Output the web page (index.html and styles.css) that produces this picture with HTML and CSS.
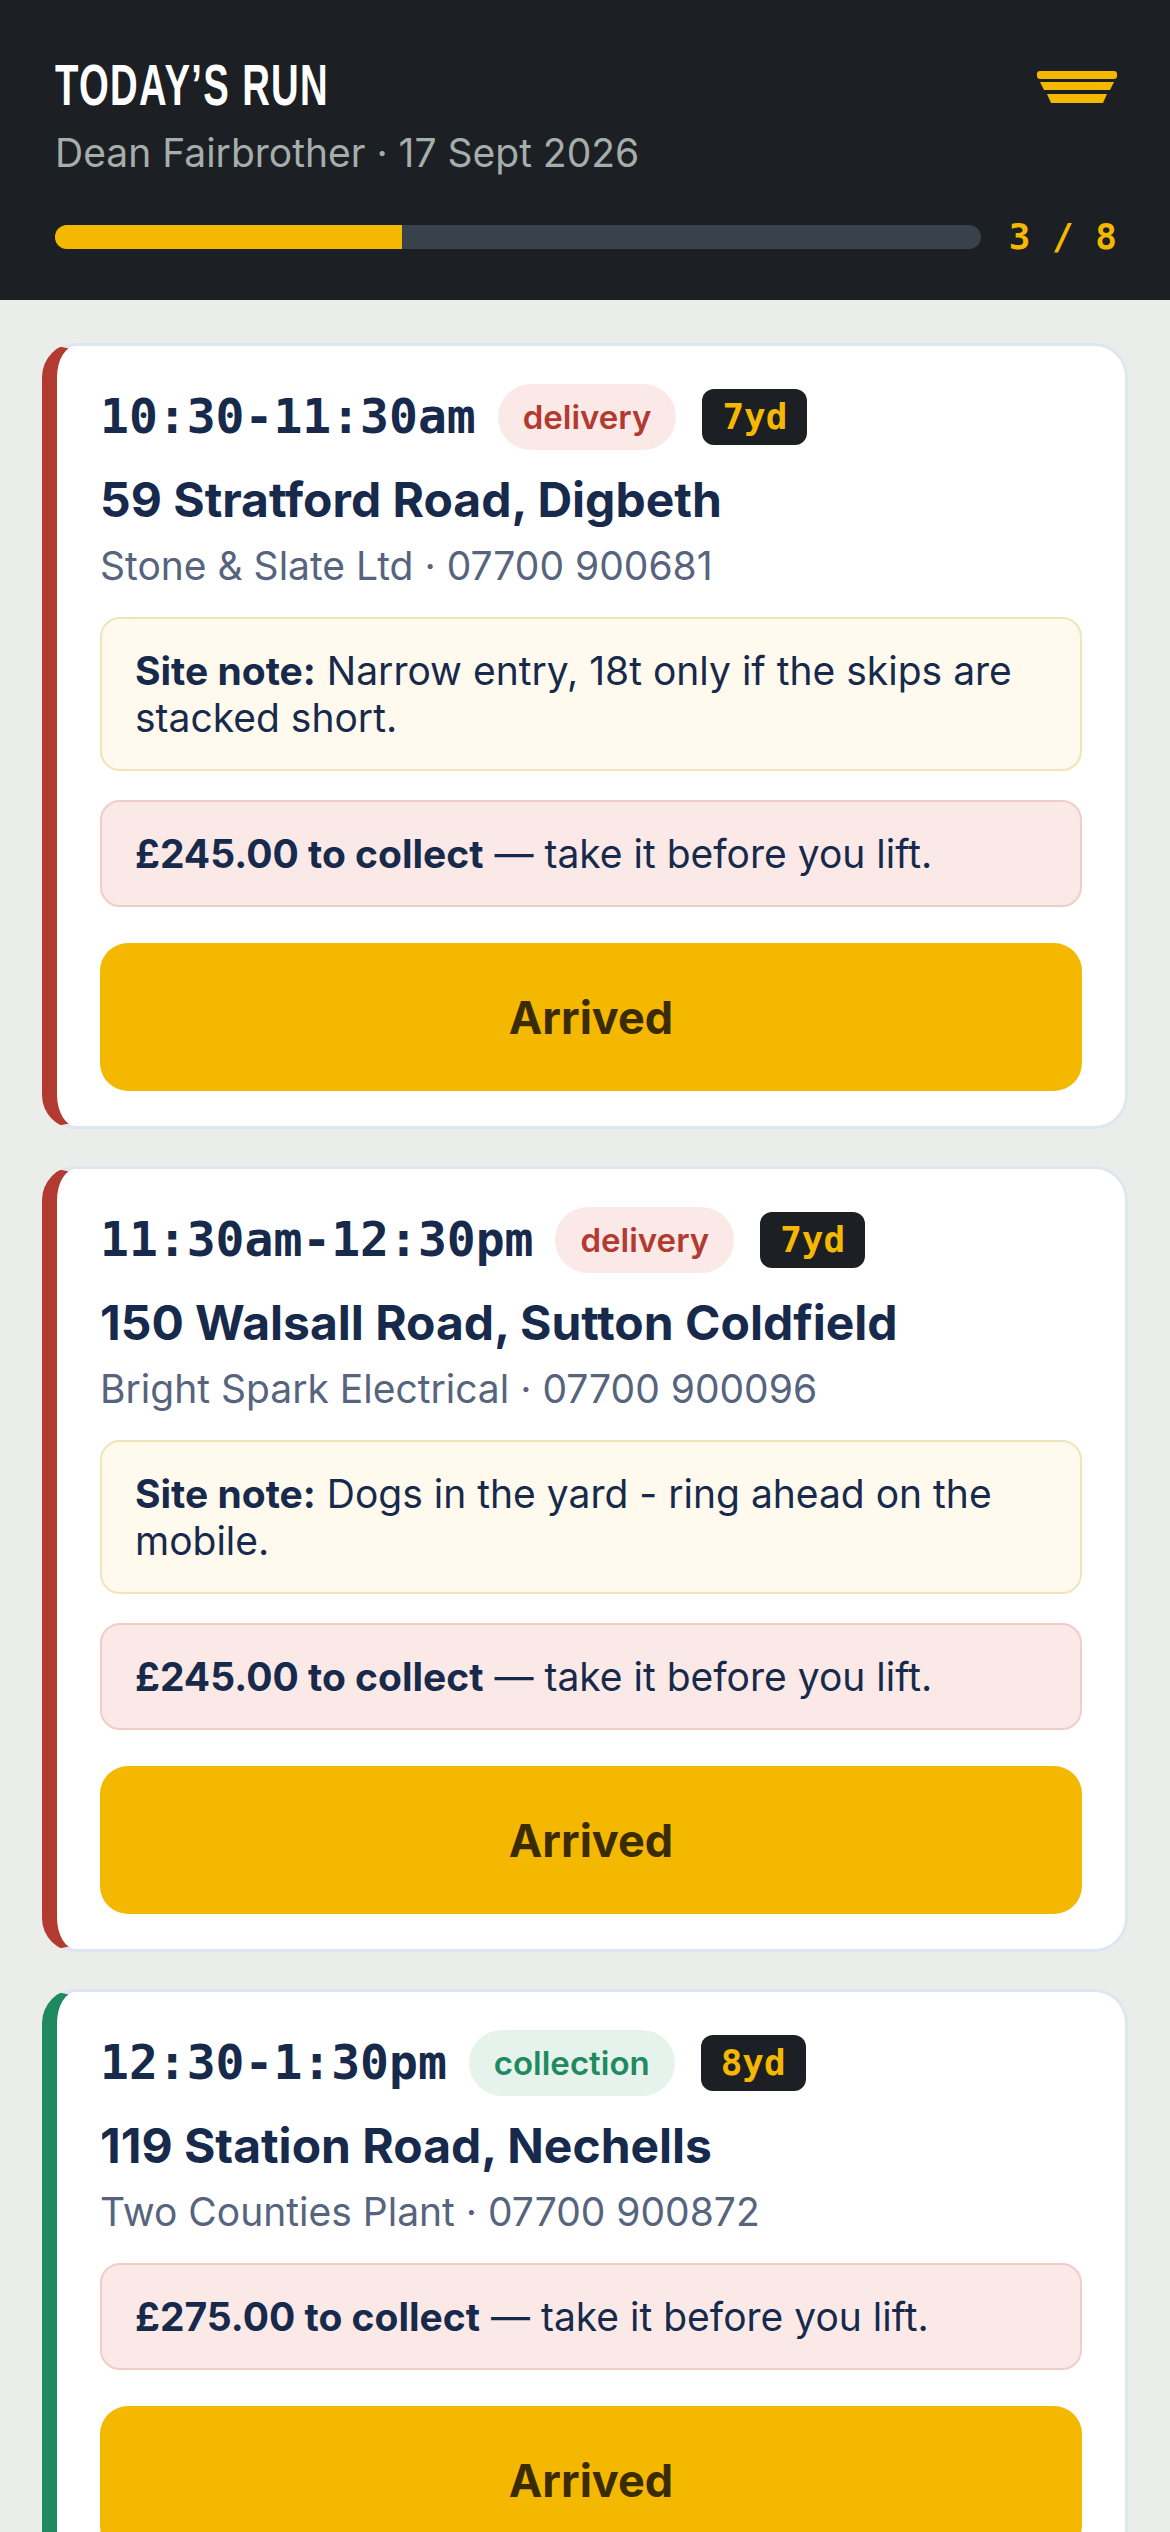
FILE: index.html
```html
<!DOCTYPE html>
<html>
  <head>
    <meta charset="utf-8">
    <title>Today's Run</title>
    <link rel="stylesheet" href="styles.css">
  </head>
  <body>
    <header class="top">
      <div class="top-row">
        <h1 class="title">TODAY’S RUN</h1>
        <svg class="skip-icon" width="80" height="32" viewBox="0 0 80 32">
          <rect x="0" y="0" width="80" height="8" rx="3" fill="#f5b800"/>
          <polygon points="3,11 77,11 73,19 7,19" fill="#f5b800"/>
          <polygon points="10,23 70,23 66,32 14,32" fill="#f5b800"/>
        </svg>
      </div>
      <div class="sub">Dean Fairbrother · 17 Sept 2026</div>
      <div class="progress">
        <div class="bar"><div class="fill" style="width: 37.5%"></div></div>
        <div class="count">3 / 8</div>
      </div>
    </header>

    <main class="jobs">
      <!-- job 1 -->
      <section class="card delivery">
        <div class="card-head">
          <span class="time">10:30-11:30am</span>
          <span class="pill">delivery</span>
          <span class="size">7yd</span>
        </div>
        <h2 class="addr">59 Stratford Road, Digbeth</h2>
        <div class="who">Stone &amp; Slate Ltd · 07700 900681</div>
        <div class="note"><b>Site note:</b> Narrow entry, 18t only if the skips are stacked short.</div>
        <div class="cash"><b>£245.00 to collect</b> — take it before you lift.</div>
        <button class="go">Arrived</button>
      </section>

      <!-- job 2 -->
      <section class="card delivery">
        <div class="card-head">
          <span class="time">11:30am-12:30pm</span>
          <span class="pill">delivery</span>
          <span class="size">7yd</span>
        </div>
        <h2 class="addr">150 Walsall Road, Sutton Coldfield</h2>
        <div class="who">Bright Spark Electrical · 07700 900096</div>
        <div class="note"><b>Site note:</b> Dogs in the yard - ring ahead on the mobile.</div>
        <div class="cash"><b>£245.00 to collect</b> — take it before you lift.</div>
        <button class="go">Arrived</button>
      </section>

      <!-- job 3 -->
      <section class="card collection">
        <div class="card-head">
          <span class="time">12:30-1:30pm</span>
          <span class="pill">collection</span>
          <span class="size">8yd</span>
        </div>
        <h2 class="addr">119 Station Road, Nechells</h2>
        <div class="who">Two Counties Plant · 07700 900872</div>
        <div class="cash"><b>£275.00 to collect</b> — take it before you lift.</div>
        <button class="go">Arrived</button>
      </section>
    </main>
  </body>
</html>
```

FILE: styles.css
```css
body {
  margin: 0;
  background-color: #ebedea;
  font-family: Inter, "Noto Sans", sans-serif;
  color: #172a4b;
}

/* header */
.top {
  background-color: #1c1f24;
  padding: 55px 53px 42px 55px;
}
.top-row {
  display: flex;
  justify-content: space-between;
  align-items: flex-start;
}
.title {
  margin: 0;
  font-family: "Liberation Sans", sans-serif;
  font-weight: 700;
  font-size: 58px;
  line-height: 60px;
  letter-spacing: 2px;
  color: #fff;
  transform: scaleX(0.66);
  transform-origin: left center;
}
.skip-icon {
  margin-top: 16px;
  display: block;
}
.sub {
  margin-top: 13px;
  font-size: 39px;
  line-height: 50px;
  color: #a5aeaa;
}
.progress {
  display: flex;
  align-items: center;
  gap: 28px;
  margin-top: 37px;
}
.bar {
  flex: 1;
  height: 24px;
  background-color: #39414b;
  border-radius: 12px;
  overflow: hidden;
}
.fill {
  height: 100%;
  background-color: #f5b800;
}
.count {
  font-family: "DejaVu Sans Mono", monospace;
  font-weight: 700;
  font-size: 36px;
  line-height: 1.2;
  color: #f5b800;
  white-space: pre;
}

/* job cards */
.jobs {
  display: flex;
  flex-direction: column;
  gap: 37px;
  padding: 43px 42px;
}
.card {
  background-color: #fff;
  border: 3px solid #dfe6ef;
  border-left: 15px solid #b23a30;
  border-radius: 34px;
  padding: 38px 43px 35px 43px;
}
.card.collection {
  border-left-color: #1f8a5f;
}
.card-head {
  display: flex;
  align-items: center;
  gap: 22px;
}
.time {
  font-family: "DejaVu Sans Mono", monospace;
  font-weight: 700;
  font-size: 48px;
  line-height: 1.2;
  color: #172a4b;
}
.pill {
  font-size: 33px;
  font-weight: 600;
  line-height: 40px;
  padding: 13px 25px;
  border-radius: 33px;
  background-color: #fbe9e7;
  color: #b23a30;
}
.collection .pill {
  background-color: #e5f3ec;
  color: #1f8a5f;
}
.size {
  margin-left: 4px;
  font-family: "DejaVu Sans Mono", monospace;
  font-weight: 700;
  font-size: 36px;
  line-height: 42px;
  padding: 7px 20px;
  border-radius: 12px;
  background-color: #1c1f24;
  color: #f5b800;
}
.addr {
  margin: 21px 0 0;
  font-size: 48px;
  font-weight: 700;
  line-height: 57px;
}
.who {
  margin-top: 14px;
  font-size: 39px;
  line-height: 47px;
  color: #56647e;
}
.note,
.cash {
  font-size: 39px;
  line-height: 47px;
  padding: 28px 33px;
  border-radius: 20px;
}
.note {
  margin-top: 28px;
  background-color: #fffaed;
  border: 2px solid #f0e4b9;
}
.cash {
  margin-top: 28px;
  background-color: #fbe9e8;
  border: 2px solid #f0cdc8;
}
.note + .cash {
  margin-top: 29px;
}
.go {
  display: block;
  width: 100%;
  height: 148px;
  margin-top: 36px;
  border: none;
  border-radius: 28px;
  background-color: #f5b800;
  color: #3b2c00;
  font-family: Inter, sans-serif;
  font-size: 45px;
  font-weight: 700;
  cursor: pointer;
}
```
